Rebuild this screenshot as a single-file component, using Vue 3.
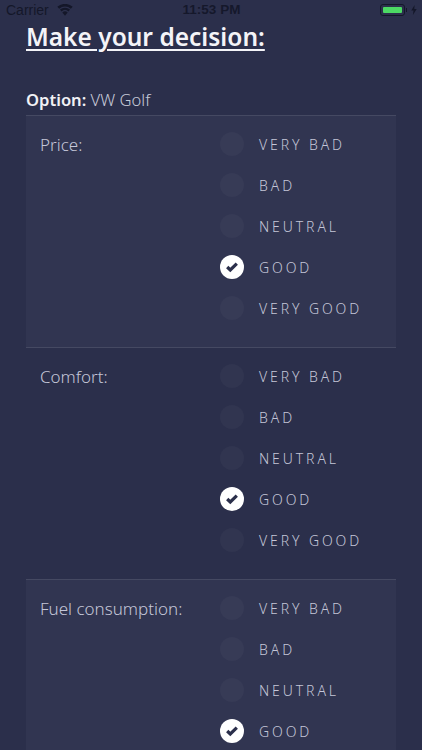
<script setup>
const levels = ['VERY BAD', 'BAD', 'NEUTRAL', 'GOOD', 'VERY GOOD']
const criteria = [
  { name: 'Price:', alt: true },
  { name: 'Comfort:', alt: false },
  { name: 'Fuel consumption:', alt: true },
]
</script>

<template>
  <div class="screen">
    <header class="status">
      <div class="status-left">
        <span>Carrier</span>
        <svg class="wifi" width="16" height="12" viewBox="0 0 16 12">
          <path d="M8 11.8 5.3 8.6a4 4 0 0 1 5.4 0Z" />
          <path d="M4.5 7.4 3 5.6a7.6 7.6 0 0 1 10 0L11.5 7.4a5.3 5.3 0 0 0-7 0Z" />
          <path d="M2.2 4.7.3 2.8a11.6 11.6 0 0 1 15.4 0l-1.9 1.9a8.8 8.8 0 0 0-11.6 0Z" />
        </svg>
      </div>
      <span class="time">11:53 PM</span>
      <div class="status-right">
        <span class="battery"><span class="battery-fill"></span></span>
        <span class="battery-cap"></span>
        <svg width="6" height="10" viewBox="0 0 6 10"><path d="M3.6 0 .3 5.6h2.2L1.9 10l3.8-6H3.3Z" /></svg>
      </div>
    </header>

    <main class="content">
      <h1 class="title">Make your decision:</h1>
      <p class="option"><strong>Option:</strong> VW Golf</p>
      <section v-for="c in criteria" :key="c.name" class="card" :class="{ alt: c.alt }">
        <div class="label">{{ c.name }}</div>
        <ul class="levels">
          <li v-for="l in levels" :key="l" class="level">
            <span class="radio" :class="{ on: l === 'GOOD' }">
              <svg v-if="l === 'GOOD'" width="14" height="12" viewBox="0 0 14 12">
                <path d="M2.2 6 5.3 9 11.8 2.6" />
              </svg>
            </span>
            <span class="level-text">{{ l }}</span>
          </li>
        </ul>
      </section>
    </main>
  </div>
</template>

<style>
html, body { margin: 0; background: #2b2f4b; }
</style>

<style scoped>
.screen {
  width: 422px;
  height: 750px;
  overflow: hidden;
  background: #2b2f4b;
  color: #fff;
  font-family: "Noto Sans", sans-serif;
}
.status {
  height: 19px;
  padding: 0 5px 0 6px;
  display: grid;
  grid-template-columns: 1fr auto 1fr;
  align-items: center;
  color: #141729;
  font-family: "Liberation Sans", sans-serif;
  font-size: 14px;
}
.status-left { display: flex; align-items: center; gap: 8px; }
.wifi path, .status-right path { fill: #141729; }
.status-right { display: flex; align-items: center; justify-content: flex-end; }
.time { font-weight: 700; font-size: 13.5px; color: #15182b; }
.battery {
  box-sizing: border-box;
  width: 25px;
  height: 12px;
  padding: 2px;
  border: 1px solid #141729;
  border-radius: 3px;
  display: block;
}
.battery-fill { display: block; height: 100%; background: #4cd964; border-radius: 1px; }
.battery-cap { width: 1px; height: 4px; background: #141729; margin: 0 4px 0 1px; }
.content { padding: 0 26px; }
.title {
  margin: 0;
  height: 36px;
  font-size: 24.5px;
  line-height: 36px;
  font-weight: 600;
  text-decoration: underline;
  text-decoration-thickness: 2px;
  text-underline-offset: 3px;
  color: #f4f4f8;
}
.option {
  margin: 33px 0 0;
  height: 27px;
  font-size: 16.6px;
  line-height: 24px;
  font-weight: 300;
  color: #c8cad9;
}
.option strong { font-weight: 600; color: #f1f1f5; }
.card {
  box-sizing: border-box;
  height: 232px;
  padding: 16px 14px 0;
  display: flex;
  border-top: 1px solid #454962;
}
.card.alt { background: #313551; }
.label {
  width: 180px;
  font-size: 17px;
  line-height: 26px;
  font-weight: 300;
  color: #c4c6d8;
}
.levels { list-style: none; margin: 0; padding: 0; }
.level {
  height: 41px;
  display: flex;
  align-items: flex-start;
  gap: 15px;
}
.radio {
  width: 24px;
  height: 24px;
  border-radius: 50%;
  background: #ffffff08;
  display: flex;
  align-items: center;
  justify-content: center;
}
.radio.on { background: #fff; }
.radio path { fill: none; stroke: #2b2f4b; stroke-width: 3.2; }
.level-text {
  font-size: 14px;
  line-height: 25px;
  font-weight: 300;
  letter-spacing: 2.9px;
  color: #c4c6d8;
}
</style>
